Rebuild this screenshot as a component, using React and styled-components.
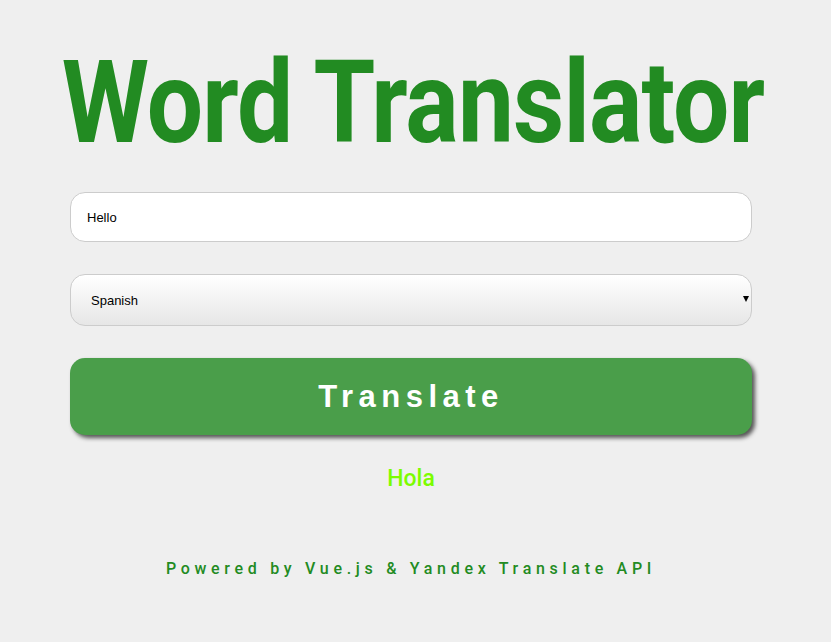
import React, { useState } from 'react'
import styled, { createGlobalStyle } from 'styled-components'

const GlobalStyle = createGlobalStyle`
  html, body {
    margin: 0;
    padding: 0;
    background: #efefef;
  }
  body {
    font-family: "Liberation Sans", Arial, sans-serif;
  }
`

const Page = styled.main`
  width: 682px;
  margin-left: 70px;
  padding-top: 38px;
  display: flex;
  flex-direction: column;
  align-items: stretch;
`

const Title = styled.h1`
  margin: 0;
  height: 130px;
  display: flex;
  justify-content: center;
  font-family: Roboto, sans-serif;
  font-weight: 700;
  font-size: 115px;
  line-height: 130px;
  color: #228b22;
  white-space: nowrap;
  letter-spacing: -1px;
  transform: translateX(2px) scaleX(0.868);
`

const Field = styled.input`
  margin-top: 24px;
  box-sizing: border-box;
  height: 50px;
  width: 100%;
  padding: 0 16px;
  border: 1px solid #cccccc;
  border-radius: 15px;
  background: #ffffff;
  font-family: "Liberation Sans", Arial, sans-serif;
  font-size: 13px;
  color: #000;
  outline: none;
`

const SelectWrap = styled.div`
  position: relative;
  margin-top: 32px;
`

const Select = styled.select`
  box-sizing: border-box;
  appearance: none;
  width: 100%;
  height: 52px;
  padding: 0 20px;
  border: 1px solid #cccccc;
  border-radius: 15px;
  background: linear-gradient(to bottom, #ffffff 0%, #f3f3f3 50%, #e6e6e6 100%);
  font-family: "Liberation Sans", Arial, sans-serif;
  font-size: 13px;
  color: #000;
  outline: none;
`

const Arrow = styled.span`
  position: absolute;
  right: 3px;
  top: 22px;
  width: 0;
  height: 0;
  border-left: 3px solid transparent;
  border-right: 3px solid transparent;
  border-top: 6px solid #000;
  pointer-events: none;
`

const Button = styled.button`
  margin-top: 32px;
  height: 77px;
  width: 100%;
  border: none;
  border-radius: 15px;
  background: #4a9e4a;
  box-shadow: 3px 3px 4px #555555;
  color: #ffffff;
  font-family: "Liberation Sans", Arial, sans-serif;
  font-weight: 700;
  font-size: 31px;
  letter-spacing: 5.5px;
  cursor: pointer;
`

const Result = styled.p`
  margin: 30px 0 0;
  text-align: center;
  font-family: Roboto, sans-serif;
  font-weight: 500;
  font-size: 23px;
  line-height: 28px;
  color: #7cfc00;
`

const Footer = styled.footer`
  margin-top: 66px;
  text-align: center;
  font-family: Roboto, sans-serif;
  font-weight: 500;
  font-size: 16px;
  letter-spacing: 4.7px;
  color: #228b22;
`

const App = () => {
  const [word, setWord] = useState('Hello')
  const [lang, setLang] = useState('es')

  return (
    <>
      <GlobalStyle />
      <Page>
        <Title>Word Translator</Title>
        <Field value={word} onChange={e => setWord(e.target.value)} />
        <SelectWrap>
          <Select value={lang} onChange={e => setLang(e.target.value)}>
            <option value="es">Spanish</option>
            <option value="fr">French</option>
            <option value="de">German</option>
          </Select>
          <Arrow />
        </SelectWrap>
        <Button>Translate</Button>
        <Result>Hola</Result>
        <Footer>Powered by Vue.js &amp; Yandex Translate API</Footer>
      </Page>
    </>
  )
}

export default App
